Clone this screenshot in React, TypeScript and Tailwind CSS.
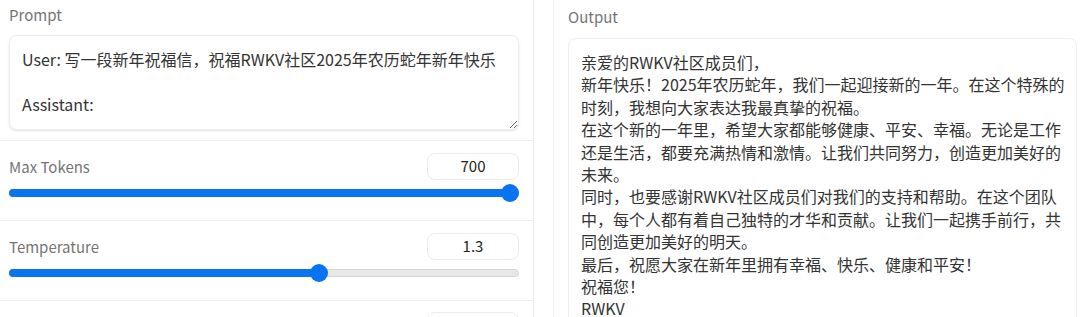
const prompt = 'User: 写一段新年祝福信，祝福RWKV社区2025年农历蛇年新年快乐\n\nAssistant:';

const output = [
  '亲爱的RWKV社区成员们，',
  '新年快乐！2025年农历蛇年，我们一起迎接新的一年。在这个特殊的时刻，我想向大家表达我最真挚的祝福。',
  '在这个新的一年里，希望大家都能够健康、平安、幸福。无论是工作还是生活，都要充满热情和激情。让我们共同努力，创造更加美好的未来。',
  '同时，也要感谢RWKV社区成员们对我们的支持和帮助。在这个团队中，每个人都有着自己独特的才华和贡献。让我们一起携手前行，共同创造更加美好的明天。',
  '最后，祝愿大家在新年里拥有幸福、快乐、健康和平安！',
  '祝福您！',
  'RWKV',
].join('\n');

interface SliderProps {
  label: string;
  value: number;
  min: number;
  max: number;
}

function SliderField({ label, value, min, max }: SliderProps) {
  const f = (value - min) / (max - min);
  return (
    <div className="shrink-0 h-[80px] border-b border-[#ededed] pl-[9px] pr-[14px] pt-[12px]">
      <div className="flex items-center justify-between h-[27px]">
        <span className="text-[15px] leading-[20px] text-[#757575]">{label}</span>
        <div className="w-[92px] h-[27px] rounded-lg border border-[#ececec] flex items-center justify-center text-[15px] text-[#222]">
          {value}
        </div>
      </div>
      <div className="relative mt-[4px] h-[18px]">
        <div className="absolute left-0 right-0 top-[5px] h-[8px] rounded-full bg-[#e8e8e8] border border-[#d6d6d6]" />
        <div
          className="absolute left-0 top-[5px] h-[8px] rounded-full bg-[#0a73f2]"
          style={{ width: `calc(${f} * (100% - 18px) + 9px)` }}
        />
        <div
          className="absolute top-0 h-[18px] w-[18px] rounded-full bg-[#0a73f2]"
          style={{ left: `calc(${f} * (100% - 18px))` }}
        />
      </div>
    </div>
  );
}

export default function App() {
  return (
    <div className="flex w-[1080px] h-[317px] overflow-hidden bg-white font-['Noto_Sans_CJK_SC',sans-serif]">
      {/* Left: inputs */}
      <div className="w-[534px] shrink-0 border-r border-[#ededed] flex flex-col">
        <div className="shrink-0 h-[141px] border-b border-[#ededed] pl-[9px] pr-[14px] pt-[5px]">
          <div className="text-[15px] leading-[20px] text-[#757575]">Prompt</div>
          <textarea
            className="mt-[10px] block w-full h-[95px] rounded-lg border border-[#eeeeee] shadow-sm px-3 py-3 text-[16px] leading-[22.4px] text-[#333] outline-none"
            defaultValue={prompt}
          />
        </div>
        <SliderField label="Max Tokens" value={700} min={10} max={700} />
        <SliderField label="Temperature" value={1.3} min={0.2} max={2} />
        <div className="shrink-0 pl-[9px] pr-[14px] pt-[11px] flex justify-end">
          <div className="w-[92px] h-[27px] rounded-lg border border-[#ececec]" />
        </div>
      </div>

      {/* Right: output */}
      <div className="ml-[19px] flex-1 border-l border-[#f1f1f1] pl-[14px] pt-[7px]">
        <div className="text-[15px] leading-[20px] text-[#757575]">Output</div>
        <div className="mt-[11px] w-[509px] h-[300px] rounded-lg border border-[#eeeeee] pl-3 pr-[11px] pt-3 text-[16px] leading-[22.4px] text-[#333] whitespace-pre-wrap">
          {output}
        </div>
      </div>
    </div>
  );
}
